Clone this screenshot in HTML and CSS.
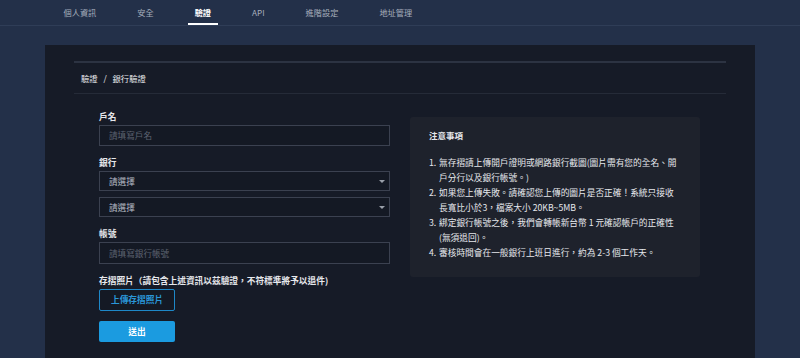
FILE: index.html
```html
<!DOCTYPE html>
<html lang="zh-Hant">
<head>
<meta charset="UTF-8">
<title>驗證 | 銀行驗證</title>
<link rel="stylesheet" href="styles.css">
</head>
<body>

<nav class="tabs">
<a class="tab">個人資訊</a>
<a class="tab">安全</a>
<a class="tab active">驗證</a>
<a class="tab">API</a>
<a class="tab">進階設定</a>
<a class="tab">地址管理</a>
</nav>

<main class="card">
<div class="crumb">驗證 <span class="sep">/</span> 銀行驗證</div>

<div class="body">
<form class="form">
<label class="label">戶名</label>
<input class="field" placeholder="請填寫戶名">

<label class="label">銀行</label>
<div class="select">請選擇<span class="caret"></span></div>
<div class="select">請選擇<span class="caret"></span></div>

<label class="label">帳號</label>
<input class="field" placeholder="請填寫銀行帳號">

<label class="label">存摺照片（請包含上述資訊以茲驗證，不符標準將予以退件)</label>
<button type="button" class="btn-outline">上傳存摺照片</button>
<button type="button" class="btn-primary">送出</button>
</form>

<aside class="notice">
<h4>注意事項</h4>
<ol>
<li><span class="n">1.</span><span>無存摺請上傳開戶證明或網路銀行截圖(圖片需有您的全名、開戶分行以及銀行帳號。)</span></li>
<li><span class="n">2.</span><span>如果您上傳失敗。請確認您上傳的圖片是否正確！系統只接收長寬比小於3，檔案大小 20KB~5MB。</span></li>
<li><span class="n">3.</span><span>綁定銀行帳號之後，我們會轉帳新台幣 1 元確認帳戶的正確性(無須退回)。</span></li>
<li><span class="n">4.</span><span>審核時間會在一般銀行上班日進行，約為 2-3 個工作天。</span></li>
</ol>
</aside>
</div>
</main>

</body>
</html>
```

FILE: styles.css
```css
/* ---------- GLOBAL ---------- */
*{margin:0;padding:0;box-sizing:border-box;}
body{
font-family:"Noto Sans CJK TC","Liberation Sans",sans-serif;
background:#233049;
color:#e6e8ec;
font-size:8.6px;
height:358px;
overflow:hidden;
}

/* ---------- TABS ---------- */
.tabs{
display:flex;
height:26px;
padding-left:43px;
border-bottom:1px solid #2f3d57;
}
.tab{
padding:0 20.5px;
line-height:25px;
color:#a5adbb;
font-size:8.2px;
position:relative;
}
.tab.active{color:#fff;font-weight:700;}
.tab.active::after{
content:"";
position:absolute;
left:50%;
margin-left:-15px;
bottom:0;
width:30px;
height:2px;
background:#fff;
}

/* ---------- CARD ---------- */
.card{
margin:19px 45px 0;
background:#161b27;
height:320px;
padding:16px 29px 0;
}
.crumb{
border-top:2px solid #2c3342;
border-bottom:1px solid #252b38;
height:33px;
line-height:30px;
font-size:8.3px;
color:#e6e8ec;
padding-left:7px;
}
.sep{margin:0 4px;}

.body{
display:flex;
gap:20px;
padding-left:25px;
}

/* ---------- FORM ---------- */
.form{
width:291px;
display:flex;
flex-direction:column;
padding-top:16.5px;
}
.label{
font-weight:700;
font-size:8.7px;
line-height:11px;
margin-bottom:3px;
color:#e6e8ec;
}
.field{
height:21.5px;
background:#141924;
border:1px solid #3b4150;
color:#ddd;
font-family:inherit;
font-size:8.6px;
padding:0 9px;
margin-bottom:11px;
outline:none;
}
.field::placeholder{color:#5c6270;}
.select{
height:20px;
border:1px solid #3b4150;
background:#141924;
color:#b8bdc6;
font-size:8.6px;
line-height:18px;
padding:0 9px;
margin-bottom:6px;
position:relative;
}
.select + .label{margin-top:5px;}
.caret{
position:absolute;
right:4px;
top:8px;
border-left:3px solid transparent;
border-right:3px solid transparent;
border-top:3px solid #9aa0aa;
}
.btn-outline{
width:76px;
height:22px;
border:1px solid #1e88c8;
background:#141924;
color:#2a96d8;
font-family:inherit;
font-weight:700;
font-size:8.7px;
border-radius:2px;
margin-bottom:10px;
}
.btn-primary{
width:76px;
height:21.5px;
border:none;
background:#1b9be0;
color:#fff;
font-family:inherit;
font-weight:700;
font-size:8.7px;
border-radius:2px;
}

/* ---------- NOTICE ---------- */
.notice{
margin-top:23px;
width:290px;
height:160px;
background:#1e222c;
border-radius:3px;
padding:13px 21px 0 19px;
}
.notice h4{
font-size:8.5px;
line-height:11px;
font-weight:700;
color:#e6e8ec;
margin-bottom:14px;
}
.notice ol{
list-style:none;
font-size:8.7px;
line-height:15px;
color:#e6e8ec;
}
.notice li{display:flex;}
.notice .n{width:10px;flex-shrink:0;}
```
